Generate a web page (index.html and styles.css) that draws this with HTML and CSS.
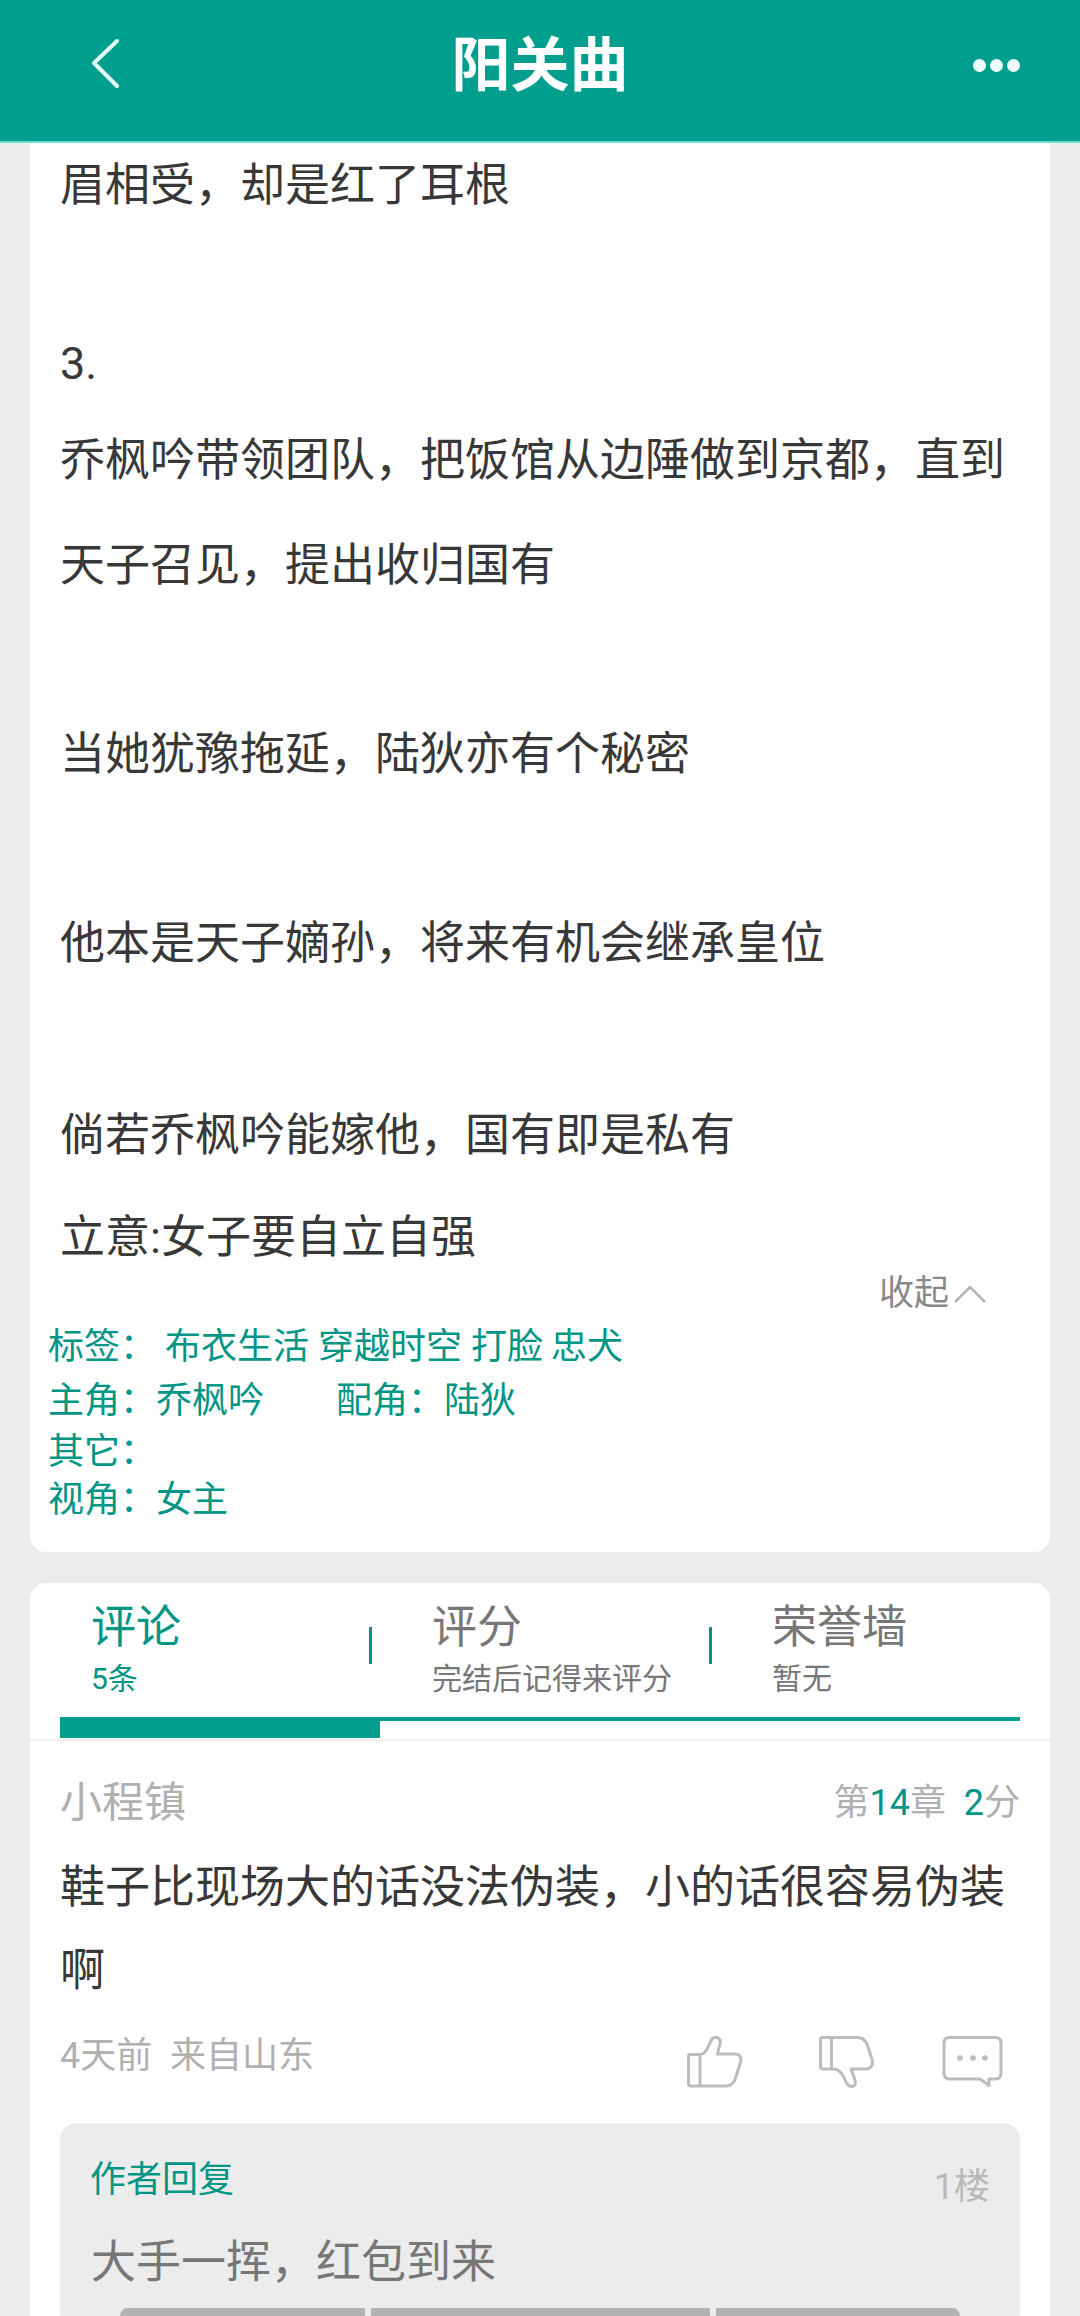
FILE: index.html
```html
<!DOCTYPE html>
<html lang="zh-CN">
<head>
<meta charset="utf-8">
<title>阳关曲</title>
<link rel="stylesheet" href="styles.css">
</head>
<body>
<header class="topbar">
  <svg class="back" viewBox="0 0 24 45"><path d="M24 0 L1 22 L24 45"/></svg>
  <h1 class="title">阳关曲</h1>
  <div class="more"><i></i><i></i><i></i></div>
</header>
<main class="page">
  <section class="card intro">
    <p class="first">眉相受，却是红了耳根</p>
    <p class="num">3.</p>
    <p class="para lead">乔枫吟带领团队，把饭馆从边陲做到京都，直到天子召见，提出收归国有</p>
    <p class="para gap">当她犹豫拖延，陆狄亦有个秘密</p>
    <p class="para gap">他本是天子嫡孙，将来有机会继承皇位</p>
    <p class="para gap late">倘若乔枫吟能嫁他，国有即是私有</p>
    <p class="idea">立意:女子要自立自强</p>
    <div class="fold">收起<svg class="up" viewBox="0 0 32 16"><path d="M1 16 L16 1 L31 16"/></svg></div>
    <div class="tags">
      <div class="tag-line"><span class="label">标签：</span><span class="tag">布衣生活</span><span class="tag">穿越时空</span><span class="tag short">打脸</span><span class="tag">忠犬</span></div>
      <div class="tag-line"><span class="person">主角：乔枫吟</span><span>配角：陆狄</span></div>
      <div class="tag-line">其它：</div>
      <div class="tag-line">视角：女主</div>
    </div>
  </section>
  <section class="card comments">
    <div class="tabs">
      <div class="tab active"><div class="tab-name">评论</div><div class="tab-sub">5条</div></div>
      <div class="tab split"><div class="tab-name">评分</div><div class="tab-sub">完结后记得来评分</div></div>
      <div class="tab split"><div class="tab-name">荣誉墙</div><div class="tab-sub">暂无</div></div>
    </div>
    <div class="track"><div class="track-bar"></div></div>
    <div class="rule"></div>
    <article class="comment">
      <div class="comment-head">
        <span class="user">小程镇</span>
        <span class="chapter">第<b>14</b>章 &nbsp;<b>2</b>分</span>
      </div>
      <p class="comment-text">鞋子比现场大的话没法伪装，小的话很容易伪装啊</p>
      <div class="comment-meta">
        <span class="when">4天前 &nbsp;来自山东</span>
        <div class="actions">
          <svg class="icon" viewBox="0 0 55 52"><path d="M3 18.5H13C17 18.5 20 14 22 9L25 3C26 1 28 1 30 1.5C33 2.5 34 5 33 8L30.5 18H48C52 18 54 20.5 54 24C54 25 53.5 26 53 28L48.5 42C47 47 44 50 39 50H4C2 50 1.5 49 1.5 47V20.5C1.5 19 2 18.5 3 18.5ZM13 18.5V50"/></svg>
          <svg class="icon" viewBox="0 0 55 52"><path d="M3.5 1.5H38C43 1.5 46 3.5 48 8L53 23C54.5 29 52 33 47 33H32L36 44C37.5 49 35 50.5 33 50.5C30.5 50.5 28.5 49 27 46C24 39 21 33 14 33H3.5C2 33 1.5 32 1.5 31V3.5C1.5 2 2 1.5 3.5 1.5ZM12.5 1.5V33"/></svg>
          <svg class="icon wide" viewBox="0 0 59 52"><path d="M7 1.5H52C56 1.5 58 3.5 58 7V37C58 41 56 43 52 43H46V49.5L37 43H7C3 43 1 41 1 37V7C1 3.5 3 1.5 7 1.5Z"/><circle class="dot" cx="17" cy="22" r="2.8"/><circle class="dot" cx="30" cy="22" r="2.8"/><circle class="dot" cx="42" cy="22" r="2.8"/></svg>
        </div>
      </div>
      <div class="reply">
        <div class="reply-head"><span class="reply-label">作者回复</span><span class="floor">1楼</span></div>
        <p class="reply-text">大手一挥，红包到来</p>
        <div class="reply-bars"><i class="bar-a"></i><i class="bar-b"></i><i class="bar-c"></i></div>
      </div>
    </article>
  </section>
</main>
</body>
</html>
```
FILE: styles.css
```css
* { box-sizing: border-box; }
html, body {
  margin: 0;
  height: 2316px;
  overflow: hidden;
  background: #ececec;
  font-family: "Roboto", "Noto Sans CJK SC", sans-serif;
  color: #383838;
}
p, h1 { margin: 0; }

.topbar {
  height: 143px;
  background: #009f8d;
  border-bottom: 2px solid #6fdccf;
  display: grid;
  grid-template-columns: 1fr auto 1fr;
  align-items: center;
  padding: 0 60px 10px;
}
.back { width: 24px; height: 45px; overflow: visible; margin: -4px 0 0 33px; }
.back path { fill: none; stroke: #e2fbf7; stroke-width: 4; stroke-linecap: round; stroke-linejoin: round; }
.title { font-size: 59px; line-height: 70px; font-weight: 700; color: #fff; }
.more { justify-self: end; display: flex; gap: 4px; }
.more i { width: 13px; height: 13px; border-radius: 50%; background: #f0fffc; }

.page { padding: 0 30px; display: flex; flex-direction: column; gap: 31px; }
.card { background: #fff; border-radius: 0 0 16px 16px; }
.intro { padding: 0 30px 30px; height: 1409px; }
.first { line-height: 85px; font-size: 45px; }
.num { font-size: 45px; line-height: 78px; margin-top: 97px; }
.para { font-size: 45px; line-height: 105px; }
.para.lead { margin-top: 5px; }
.para.gap { margin-top: 84px; }
.para.late { margin-top: 87px; }
.idea { font-size: 45px; line-height: 70px; margin-top: 15px; }
.fold {
  display: flex;
  justify-content: flex-end;
  align-items: center;
  font-size: 35px;
  line-height: 38px;
  color: #888;
  padding-right: 34px;
  margin-top: 2px;
}
.up { width: 32px; height: 16px; margin-left: 5px; overflow: visible; }
.up path { fill: none; stroke: #b5b5b5; stroke-width: 2.5; }

.tags { margin: 11px 0 0 -12px; color: #009585; font-size: 36px; line-height: 46px; }
.tag-line:nth-child(1) { margin-bottom: 8px; }
.tag-line:nth-child(2) { margin-bottom: 5px; }
.tag-line:nth-child(3) { margin-bottom: 2px; }
.label { margin-right: 9px; }
.tag { margin-right: 9px; }
.tag.short { margin-right: 8px; }
.person { margin-right: 72px; }

.comments { border-radius: 16px 16px 0 0; height: 800px; }
.tabs { display: grid; grid-template-columns: repeat(3, 340px); padding-top: 20px; }
.tab { position: relative; padding-left: 62px; color: #777; }
.tab.active { padding-left: 61px; color: #009585; }
.tab.split::before {
  content: "";
  position: absolute;
  left: -1px;
  top: 24px;
  width: 3px;
  height: 37px;
  background: #009585;
}
.tab-name { font-size: 45px; line-height: 50px; }
.tab-sub { font-size: 30px; line-height: 36px; margin-top: 8px; }
.track { margin: 20px 30px 0; border-top: 4px solid #009f8d; }
.track-bar { width: 320px; height: 17px; background: #009f8d; }
.rule { height: 2px; background: #efefef; margin-top: 1px; }

.comment { padding: 0 30px; }
.comment-head { display: flex; justify-content: space-between; align-items: flex-start; margin-top: 37px; height: 50px; }
.user { font-size: 42px; line-height: 50px; color: #b0b0b0; }
.chapter { font-size: 36px; line-height: 50px; color: #b0b0b0; }
.chapter b { font-weight: 400; color: #009585; }
.comment-text { font-size: 45px; line-height: 83px; margin-top: 18px; }
.comment-meta { display: flex; justify-content: space-between; align-items: flex-start; margin-top: 24px; padding-right: 18px; }
.when { font-size: 36px; line-height: 40px; color: #b0b0b0; }
.actions { display: flex; gap: 77px; }
.icon { width: 55px; height: 52px; overflow: visible; }
.icon.wide { width: 59px; margin-left: -8px; }
.icon path { fill: none; stroke: #bcbcbc; stroke-width: 3; stroke-linejoin: round; }
.icon .dot { fill: #bcbcbc; }

.reply { margin-top: 35px; padding: 35px 30px 0 31px; background: #ececec; border-radius: 16px; }
.reply-head { display: flex; justify-content: space-between; align-items: flex-start; }
.reply-label { font-size: 36px; line-height: 44px; margin-left: -1px; color: #009585; }
.floor { font-size: 36px; line-height: 44px; margin-top: 7px; color: #b8b8b8; }
.reply-text { font-size: 45px; line-height: 64px; margin-top: 22px; color: #777; }
.reply-bars { display: flex; gap: 6px; margin: 13px 30px 0 29px; }
.reply-bars i { display: block; height: 20px; background: #b2b2b2; }
.bar-a { flex: 245 0 0; border-radius: 8px 0 0 8px; }
.bar-b { flex: 338 0 0; }
.bar-c { flex: 244 0 0; border-radius: 0 8px 8px 0; }
```
